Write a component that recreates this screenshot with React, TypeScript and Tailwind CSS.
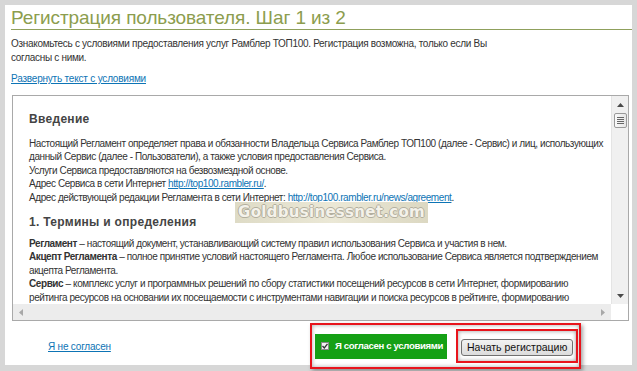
import React from 'react'

const font = { fontFamily: '"Liberation Sans", Arial, sans-serif' }

function ArrowUp() {
  return (
    <svg width="7" height="4" viewBox="0 0 7 4">
      <path d="M0 4 L3.5 0 L7 4 Z" fill="#4a4a4a" />
    </svg>
  )
}

function ArrowDown() {
  return (
    <svg width="7" height="4" viewBox="0 0 7 4">
      <path d="M0 0 L3.5 4 L7 0 Z" fill="#4a4a4a" />
    </svg>
  )
}

function ArrowLeft() {
  return (
    <svg width="4" height="7" viewBox="0 0 4 7">
      <path d="M4 0 L0 3.5 L4 7 Z" fill="#a8a8a8" />
    </svg>
  )
}

function ArrowRight() {
  return (
    <svg width="4" height="7" viewBox="0 0 4 7">
      <path d="M0 0 L4 3.5 L0 7 Z" fill="#a8a8a8" />
    </svg>
  )
}

export default function App() {
  return (
    <div
      className="w-[637px] h-[371px] bg-[#d7d7d7] pt-[5px] pl-[5px] pr-[5px] pb-[6px] overflow-hidden"
      style={font}
    >
      <div className="bg-white w-[627px] h-[360px] flex flex-col">
        {/* заголовок */}
        <div className="ml-[6px] pt-[2px] border-b border-[#8fa05c]">
          <h1 className="text-[19px] leading-[22px] text-[#8c9d4e] tracking-[-0.1px]">
            Регистрация пользователя. Шаг 1 из 2
          </h1>
        </div>

        <p className="ml-[6px] mt-[7px] text-[10px] tracking-[-0.3px] leading-[14px] text-[#333] whitespace-nowrap">
          Ознакомьтесь с условиями предоставления услуг Рамблер ТОП100. Регистрация возможна, только если Вы
          <br />
          согласны с ними.
        </p>
        <a
          href="#"
          className="ml-[6px] mt-[7px] text-[10px] tracking-[-0.2px] leading-[14px] text-[#0d74b5] underline self-start"
        >
          Развернуть текст с условиями
        </a>

        {/* текст регламента */}
        <div className="ml-[7px] mr-[3px] mt-[9px] h-[227px] border border-[#a9a9a9] grid grid-cols-[1fr_17px] grid-rows-[1fr_16px]">
          <div className="relative overflow-hidden pl-[16px] pt-[15px] text-[#333] text-[10px] tracking-[-0.42px] leading-[13.4px] whitespace-nowrap">
            <h2 className="text-[12px] leading-[16px] font-bold text-[#444] tracking-[0.3px]">Введение</h2>
            <div className="mt-[10px]">
              <p>
                Настоящий Регламент определяет права и обязанности Владельца Сервиса Рамблер ТОП100 (далее - Сервис) и лиц, использующих
                <br />
                данный Сервис (далее - Пользователи), а также условия предоставления Сервиса.
              </p>
              <p>Услуги Сервиса предоставляются на безвозмездной основе.</p>
              <p>
                Адрес Сервиса в сети Интернет{' '}
                <a href="#" className="text-[#0d74b5] underline">http://top100.rambler.ru/</a>.
              </p>
              <p>
                Адрес действующей редакции Регламента в сети Интернет:{' '}
                <a href="#" className="text-[#0d74b5] underline">http://top100.rambler.ru/news/agreement</a>.
              </p>
            </div>
            <h2 className="mt-[10px] text-[12px] leading-[16px] font-bold text-[#444] tracking-[0.3px]">
              1. Термины и определения
            </h2>
            <div className="mt-[7px]">
              <p>
                <b>Регламент</b> – настоящий документ, устанавливающий систему правил использования Сервиса и участия в нем.
              </p>
              <p>
                <b>Акцепт Регламента</b> – полное принятие условий настоящего Регламента. Любое использование Сервиса является подтверждением
                <br />
                акцепта Регламента.
              </p>
              <p>
                <b>Сервис</b> – комплекс услуг и программных решений по сбору статистики посещений ресурсов в сети Интернет, формированию
                <br />
                рейтинга ресурсов на основании их посещаемости с инструментами навигации и поиска ресурсов в рейтинге, формированию
              </p>
            </div>

            {/* водяной знак */}
            <div className="absolute left-[222px] top-[106px] w-[193px] h-[21px] bg-gradient-to-r from-[#dedbc6] via-[#ebe8d6] to-[#dcd8c2] flex items-center justify-center">
              <span
                className="text-[15px] font-bold text-[#f4f2ea] tracking-[0.3px] [text-shadow:-1px_0_#b3af9e,1px_0_#b3af9e,0_-1px_#b3af9e,0_1px_#b3af9e]"
                style={{ fontFamily: '"DejaVu Sans", sans-serif' }}
              >
                Goldbusinessnet.com
              </span>
            </div>
          </div>

          {/* вертикальная прокрутка */}
          <div className="bg-[#f0f0f0] border-l border-[#e4e4e4] flex flex-col items-center">
            <div className="h-[17px] flex items-center justify-center">
              <ArrowUp />
            </div>
            <div className="w-[13px] h-[15px] bg-gradient-to-r from-[#fafafa] to-[#e6e6e6] border border-[#9a9a9a] rounded-[2px] flex flex-col items-center justify-center gap-[1px]">
              <span className="w-[7px] h-px bg-[#666]" />
              <span className="w-[7px] h-px bg-[#666]" />
              <span className="w-[7px] h-px bg-[#666]" />
              <span className="w-[7px] h-px bg-[#666]" />
            </div>
            <div className="flex-1" />
            <div className="h-[17px] flex items-center justify-center">
              <ArrowDown />
            </div>
          </div>

          {/* горизонтальная прокрутка */}
          <div className="bg-[#ececec] flex items-center justify-between px-[6px]">
            <ArrowLeft />
            <ArrowRight />
          </div>
          <div className="bg-white" />
        </div>

        {/* кнопки */}
        <div className="flex-1 flex items-center">
          <div className="w-[305px] pl-[43px]">
            <a href="#" className="text-[10px] tracking-[-0.2px] text-[#0d74b5] underline">
              Я не согласен
            </a>
          </div>
          <div className="mt-[2px] border-2 border-[#e8141c] bg-white shadow-[2px_2px_4px_rgba(0,0,0,0.35),inset_0_0_4px_rgba(0,0,0,0.35)] pl-[3px] pr-[1px] py-[4px] flex items-center gap-[9px]">
            <label className="h-[25px] w-[132px] bg-[#15a015] flex items-center pl-[6px] gap-[6px] text-white text-[9.6px] tracking-[-0.35px] font-bold whitespace-nowrap overflow-hidden">
              <span className="shrink-0 w-[8px] h-[8px] bg-[#f2f2f2] border border-[#888] flex items-center justify-center">
                <svg width="6" height="6" viewBox="0 0 6 6">
                  <path d="M0.5 3 L2.3 5 L5.5 0.8" stroke="#333" strokeWidth="1.3" fill="none" />
                </svg>
              </span>
              Я согласен с условиями
            </label>
            <div className="border-2 border-[#e8141c] shadow-[inset_0_0_4px_rgba(0,0,0,0.4)] p-[3px]">
              <button className="h-[17px] px-[5px] bg-gradient-to-b from-[#f2f2f2] to-[#dcdcdc] border border-[#707070] rounded-[3px] text-[10.5px] text-[#111] leading-none whitespace-nowrap">
                Начать регистрацию
              </button>
            </div>
          </div>
        </div>
      </div>
    </div>
  )
}
